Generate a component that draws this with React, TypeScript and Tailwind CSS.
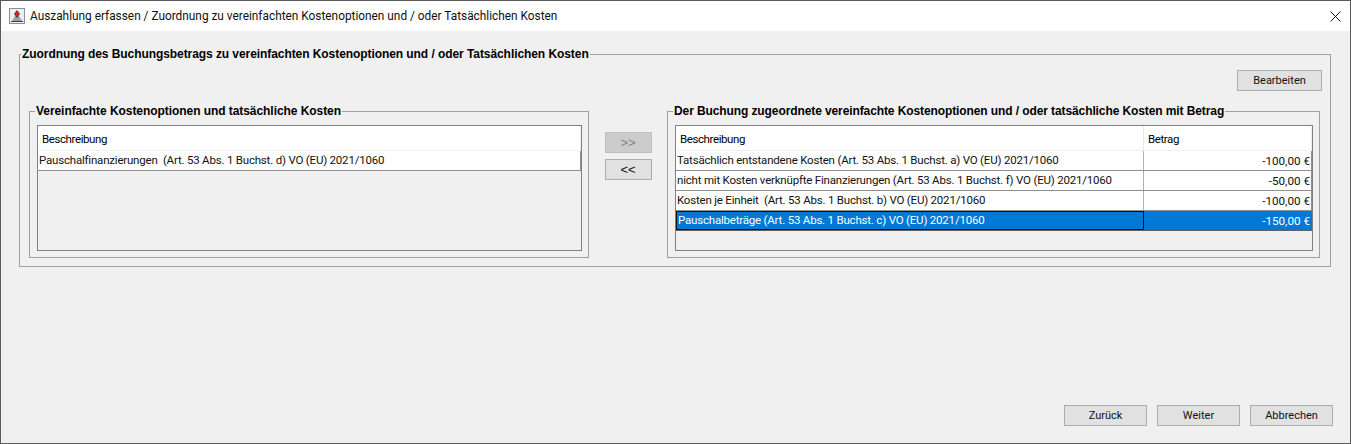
const cellFont = "font-['Roboto','Liberation_Sans',sans-serif] text-[11px] leading-[16px]";
const rowFont = "text-[11.5px] tracking-[-0.2px] pb-[2px]";
const headFont = "text-[11.5px] tracking-[-0.4px] pt-[2px]";
const legendFont = "px-px font-['Liberation_Sans',sans-serif] font-bold text-[12px] leading-[14px] whitespace-nowrap";

const assigned = [
  { text: "Tatsächlich entstandene Kosten (Art. 53 Abs. 1 Buchst. a) VO (EU) 2021/1060", amount: "-100,00 €" },
  { text: "nicht mit Kosten verknüpfte Finanzierungen (Art. 53 Abs. 1 Buchst. f) VO (EU) 2021/1060", amount: "-50,00 €" },
  { text: "Kosten je Einheit  (Art. 53 Abs. 1 Buchst. b) VO (EU) 2021/1060", amount: "-100,00 €" },
];

const WinButton = ({ label, className = "" }: { label: string; className?: string }) => (
  <button className={`h-[21px] border border-[#adadad] bg-[#e1e1e1] text-[#111] text-center ${cellFont} ${className}`}>
    {label}
  </button>
);

const App = () => {
  return (
    <div className={`w-[1351px] h-[444px] flex flex-col border border-[#5a5a5a] bg-[#f0f0f0] text-black overflow-hidden ${cellFont}`}>
      {/* title bar */}
      <div className="h-[30px] shrink-0 bg-white flex items-center pl-[8px] pr-[9px]">
        <svg width="16" height="16" viewBox="0 0 16 16" className="shrink-0">
          <rect x="0.5" y="0.5" width="15" height="15" fill="#eceef2" stroke="#8a8f98" />
          <path d="M3 13 L6 8 H10 L13 13 Z" fill="#9aa0a8" />
          <path d="M2 13 H14 V14 H2 Z" fill="#3c4048" />
          <path d="M8 2 L11 6 L8 10 L5 6 Z" fill="#3c4048" />
          <circle cx="8" cy="6" r="2.2" fill="#d8202a" />
        </svg>
        <span className="ml-[5px] text-[11.85px] text-[#111]">
          Auszahlung erfassen / Zuordnung zu vereinfachten Kostenoptionen und / oder Tatsächlichen Kosten
        </span>
        <svg width="11" height="11" viewBox="0 0 11 11" className="ml-auto">
          <path d="M0.5 0.5 L10.5 10.5 M10.5 0.5 L0.5 10.5" stroke="#111" strokeWidth="1" />
        </svg>
      </div>

      <div className="flex-1 flex flex-col pl-[18px] pr-[19px] pt-[16px] pb-[17px]">
        {/* outer group */}
        <fieldset className="h-[220px] border border-[#a0a0a0] pl-[9px] pr-[8px] pb-[8px] flex flex-col">
          <legend className={`-ml-[8px] tracking-[-0.07px] ${legendFont}`}>
            Zuordnung des Buchungsbetrags zu vereinfachten Kostenoptionen und / oder Tatsächlichen Kosten
          </legend>
          <div className="flex justify-end mt-[9px]">
            <WinButton label="Bearbeiten" className="w-[85px]" />
          </div>

          <div className="flex mt-[13px] mr-[2px]">
            {/* left group */}
            <fieldset className="w-[560px] shrink-0 h-[154px] border border-[#a0a0a0] pl-[7px] pr-[6px] pb-[6px] flex flex-col">
              <legend className={`-ml-[2px] tracking-[-0.06px] ${legendFont}`}>
                Vereinfachte Kostenoptionen und tatsächliche Kosten
              </legend>
              <div className="flex-1 mt-[7px] border border-[#808080] bg-[#f0f0f0] flex flex-col">
                <div className={`h-[25px] shrink-0 bg-white flex items-center pl-[4px] border-b border-[#eeeeee] border-r border-r-[#eeeeee] ${headFont}`}>
                  Beschreibung
                </div>
                <div className={`h-[20px] shrink-0 bg-white flex items-center pl-px whitespace-pre border-b border-b-[#909090] border-r border-r-[#909090] text-[#111] ${rowFont}`}>
                  Pauschalfinanzierungen  (Art. 53 Abs. 1 Buchst. d) VO (EU) 2021/1060
                </div>
              </div>
            </fieldset>

            {/* arrows */}
            <div className="w-[78px] shrink-0 flex flex-col items-center gap-[6px] pt-[28px]">
              <button className="w-[47px] h-[21px] border border-[#bfbfbf] bg-[#cccccc] text-[#838383] text-center font-['Liberation_Sans',sans-serif] text-[13px] leading-none">&gt;&gt;</button>
              <button className="w-[47px] h-[21px] border border-[#adadad] bg-[#e1e1e1] text-[#111] text-center font-['Liberation_Sans',sans-serif] text-[13px] leading-none">&lt;&lt;</button>
            </div>

            {/* right group */}
            <fieldset className="flex-1 h-[154px] border border-[#a0a0a0] pl-[7px] pr-[6px] pb-[6px] flex flex-col">
              <legend className={`-ml-[2px] tracking-[-0.1px] ${legendFont}`}>
                Der Buchung zugeordnete vereinfachte Kostenoptionen und / oder tatsächliche Kosten mit Betrag
              </legend>
              <div className="flex-1 mt-[7px] border border-[#808080] bg-[#f0f0f0] flex flex-col">
                <div className="h-[25px] shrink-0 bg-white flex border-b border-r border-[#eeeeee]">
                  <div className={`w-[468px] shrink-0 flex items-center pl-[4px] border-r border-[#e8e8e8] ${headFont}`}>Beschreibung</div>
                  <div className={`flex-1 flex items-center pl-[4px] ${headFont}`}>Betrag</div>
                </div>
                {assigned.map((row) => (
                  <div key={row.text} className="h-[20px] shrink-0 bg-white flex border-b border-r border-[#909090] text-[#111]">
                    <div className={`w-[468px] shrink-0 flex items-center pl-px whitespace-pre border-r border-[#b0b0b0] ${rowFont}`}>{row.text}</div>
                    <div className="flex-1 flex items-center justify-end pr-px text-[11.7px]">{row.amount}</div>
                  </div>
                ))}
                <div className="h-[20px] shrink-0 bg-[#0078d7] flex text-white border-b border-r border-[#606060]">
                  <div className={`w-[468px] shrink-0 flex items-center pl-px border border-[#111] whitespace-pre ${rowFont}`}>
                    Pauschalbeträge (Art. 53 Abs. 1 Buchst. c) VO (EU) 2021/1060
                  </div>
                  <div className="flex-1 flex items-center justify-end pr-px text-[11.7px]">-150,00 €</div>
                </div>
              </div>
            </fieldset>
          </div>
        </fieldset>

        {/* footer */}
        <div className="mt-auto flex justify-end gap-[10px] -mr-[2px]">
          <WinButton label="Zurück" className="w-[83px]" />
          <WinButton label="Weiter" className="w-[83px]" />
          <WinButton label="Abbrechen" className="w-[83px]" />
        </div>
      </div>
    </div>
  );
};

export default App;
